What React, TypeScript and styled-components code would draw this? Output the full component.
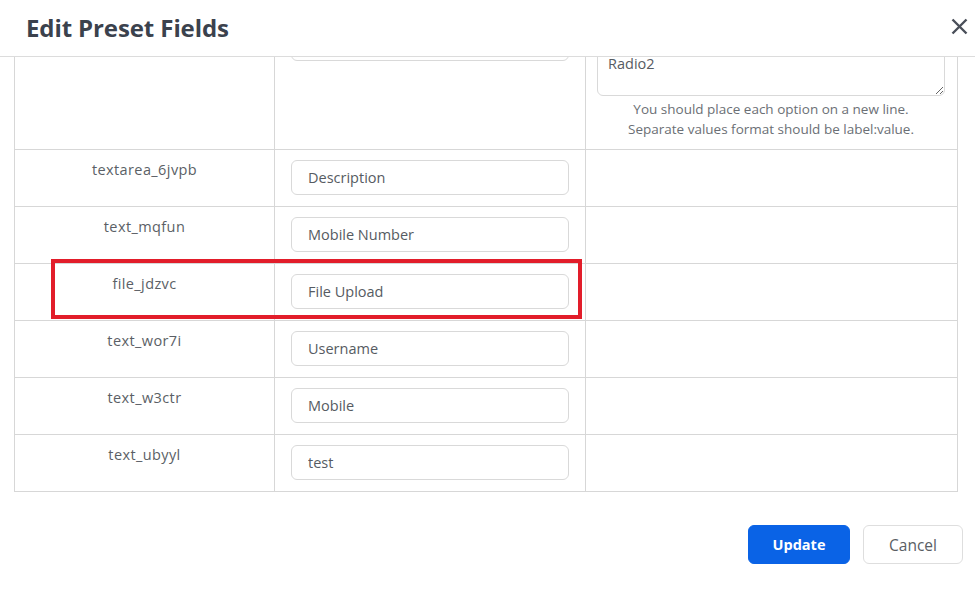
import { useLayoutEffect, useRef } from 'react';
import styled, { createGlobalStyle } from 'styled-components';

const GlobalStyle = createGlobalStyle`
  html, body {
    margin: 0;
    padding: 0;
    background: #ffffff;
  }
  body {
    font-family: "Open Sans", "Noto Sans", sans-serif;
    color: #555a60;
  }
  * {
    box-sizing: border-box;
  }
`;

const Modal = styled.div`
  position: relative;
  width: 975px;
  height: 593px;
  display: flex;
  flex-direction: column;
  background: #ffffff;
  overflow: hidden;
`;

const Header = styled.div`
  height: 57px;
  flex-shrink: 0;
  display: flex;
  align-items: center;
  justify-content: space-between;
  padding: 0 5px 0 26px;
  border-bottom: 1px solid #dcdcdc;
`;

const Title = styled.h2`
  margin: 0 0 2px;
  font-size: 24px;
  font-weight: 700;
  color: #3b424d;
  letter-spacing: -0.1px;
`;

const CloseButton = styled.button`
  width: 22px;
  height: 26px;
  display: flex;
  align-items: center;
  justify-content: center;
  padding: 0;
  margin-bottom: 4px;
  border: none;
  background: transparent;
  color: #4a4f59;
  cursor: pointer;
`;

const Body = styled.div`
  height: 448px;
  flex-shrink: 0;
  overflow: hidden;
  padding: 0 18px 14px 14px;
`;

const Table = styled.table`
  width: 943px;
  table-layout: fixed;
  border-collapse: collapse;
`;

const Cell = styled.td<{ $align?: 'center' | 'left' }>`
  border: 1px solid #d7d7d7;
  vertical-align: top;
  padding: 10px 16px 11px;
  height: 57px;
  text-align: ${props => props.$align || 'left'};
`;

const FieldKey = styled.div`
  font-size: 14.5px;
  line-height: 20px;
  letter-spacing: 0.4px;
  color: #5b5f66;
`;

const TextInput = styled.input`
  display: block;
  width: 100%;
  height: 35px;
  padding: 0 16px;
  border: 1px solid #d9d9d9;
  border-radius: 6px;
  font-family: inherit;
  font-size: 14.5px;
  color: #565b62;
  background: #ffffff;
  outline: none;
`;

const OptionsCell = styled.td`
  border: 1px solid #d7d7d7;
  vertical-align: top;
  padding: 11px 12px 10px 11px;
`;

const OptionsArea = styled.textarea`
  display: block;
  width: 100%;
  height: 69px;
  padding: 6px 10px;
  border: 1px solid #d9d9d9;
  border-radius: 6px;
  font-family: inherit;
  font-size: 14.5px;
  line-height: 20px;
  color: #565b62;
  resize: vertical;
  overflow-y: scroll;
  outline: none;
`;

const HelpText = styled.p`
  margin: 3px 0 0;
  font-size: 13.5px;
  line-height: 20px;
  color: #6b6f75;
  text-align: center;
`;

const Footer = styled.div`
  display: flex;
  justify-content: flex-end;
  gap: 13px;
  padding: 20px 12px 0 0;
`;

const Button = styled.button<{ $primary?: boolean }>`
  height: 39px;
  width: ${props => (props.$primary ? '102px' : '100px')};
  border-radius: 6px;
  font-family: inherit;
  font-size: ${props => (props.$primary ? '14.5px' : '15.5px')};
  font-weight: ${props => (props.$primary ? 700 : 400)};
  color: ${props => (props.$primary ? '#ffffff' : '#5a5e64')};
  background: ${props => (props.$primary ? '#0a63e6' : '#ffffff')};
  border: 1px solid ${props => (props.$primary ? '#0a63e6' : '#dedede')};
  cursor: pointer;
`;

const Highlight = styled.div`
  position: absolute;
  left: 51px;
  top: 259px;
  width: 531px;
  height: 60px;
  border: 4px solid #e21d2a;
  pointer-events: none;
`;

const fields = [
  { key: 'textarea_6jvpb', label: 'Description' },
  { key: 'text_mqfun', label: 'Mobile Number' },
  { key: 'file_jdzvc', label: 'File Upload' },
  { key: 'text_wor7i', label: 'Username' },
  { key: 'text_w3ctr', label: 'Mobile' },
  { key: 'text_ubyyl', label: 'test' },
];

export default function App() {
  const bodyRef = useRef<HTMLDivElement>(null);

  // the preset list is shown scrolled a little, as in the open dialog
  useLayoutEffect(() => {
    if (bodyRef.current) bodyRef.current.scrollTop = 42;
  }, []);

  return (
    <>
      <GlobalStyle />
      <Modal>
        <Header>
          <Title>Edit Preset Fields</Title>
          <CloseButton aria-label="Close">
            <svg width="17" height="17" viewBox="0 0 17 17">
              <path d="M1.5 1.5 L15.5 15.5 M15.5 1.5 L1.5 15.5" stroke="currentColor" strokeWidth="2.4" />
            </svg>
          </CloseButton>
        </Header>
        <Body ref={bodyRef}>
          <Table>
            <colgroup>
              <col style={{ width: 260 }} />
              <col style={{ width: 311 }} />
              <col style={{ width: 372 }} />
            </colgroup>
            <tbody>
              <tr>
                <Cell $align="center" />
                <Cell>
                  <TextInput defaultValue="Radio" />
                </Cell>
                <OptionsCell>
                  <OptionsArea defaultValue={'Radio1\nRadio2'} />
                  <HelpText>
                    You should place each option on a new line.
                    <br />
                    Separate values format should be label:value.
                  </HelpText>
                </OptionsCell>
              </tr>
              {fields.map(field => (
                <tr key={field.key}>
                  <Cell $align="center">
                    <FieldKey>{field.key}</FieldKey>
                  </Cell>
                  <Cell>
                    <TextInput defaultValue={field.label} />
                  </Cell>
                  <Cell />
                </tr>
              ))}
            </tbody>
          </Table>
        </Body>
        <Footer>
          <Button $primary>Update</Button>
          <Button>Cancel</Button>
        </Footer>
        <Highlight />
      </Modal>
    </>
  );
}
